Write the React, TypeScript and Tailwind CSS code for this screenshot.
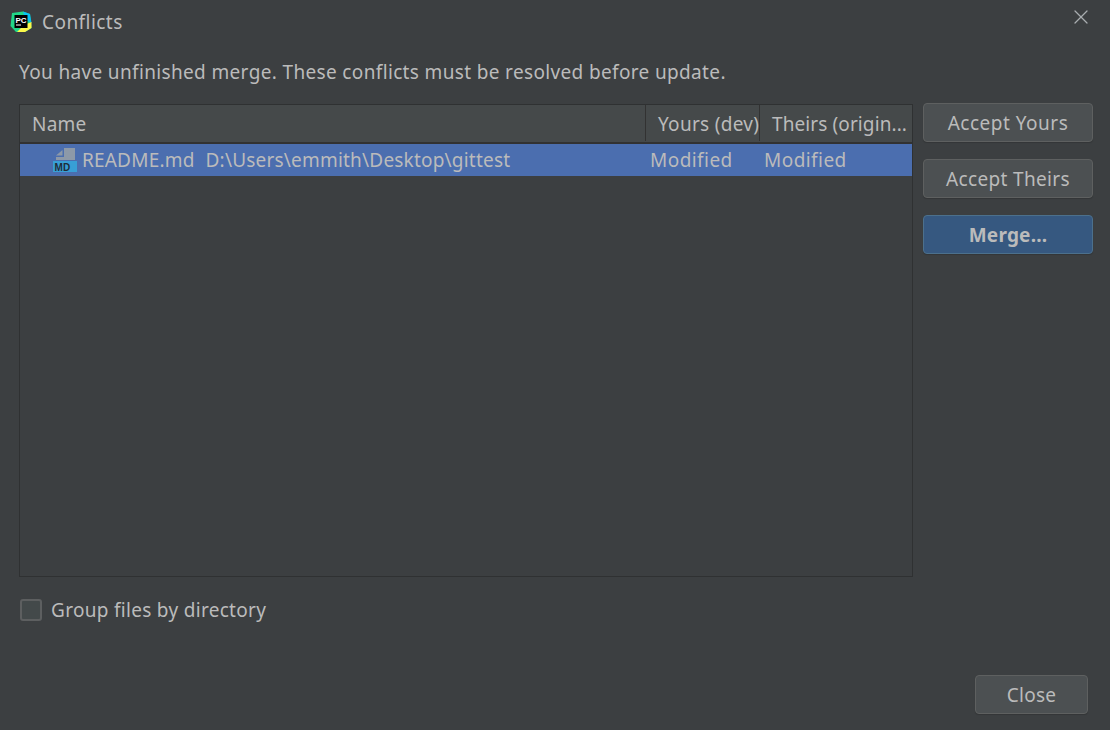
import { X } from 'lucide-react';

function PyCharmIcon() {
  return (
    <svg width="22" height="22" viewBox="0 0 22 22" className="shrink-0">
      <path d="M2 2 L13 0.5 L20 3 L21.5 17 L15 21 L6 21 L0.5 15 Z" fill="#21d789" />
      <path d="M13 0.5 L20 3 L21.5 12 L15 8 Z" fill="#07c3f2" />
      <path d="M21.5 11 L21.5 17 L15 21 L7 21 L14 14 Z" fill="#fcf84a" />
      <rect x="4.5" y="4" width="13" height="13" fill="#000000" />
      <text x="5.5" y="11.5" fontSize="8" fontWeight="700" fill="#ffffff" fontFamily="'Liberation Sans', sans-serif">PC</text>
      <rect x="6" y="13.5" width="5" height="1" fill="#ffffff" />
    </svg>
  );
}

function MarkdownIcon() {
  return (
    <svg width="26" height="26" viewBox="0 0 26 26" className="shrink-0">
      <path d="M4 8.5 L10.5 3 L10.5 8.5 Z" fill="#8d99a8" />
      <path d="M12 1 H23 V13 H4 V10 H12 Z" fill="#8d99a8" />
      <rect x="1" y="14" width="24" height="11" fill="#389fd6" />
      <text x="2.5" y="23.5" fontSize="10" fontWeight="700" fill="#1f2d3a" fontFamily="'Liberation Sans', sans-serif">MD</text>
    </svg>
  );
}

function DialogButton({ label, primary, spacing }: { label: string; primary?: boolean; spacing: string }) {
  return (
    <button
      className={`w-[170px] h-[39px] rounded-[4px] border text-[#bbbbbb] text-[19px] shadow-[0_1px_1px_rgba(0,0,0,0.15)] ${spacing} ${
        primary ? 'bg-[#365880] border-[#4c708c] font-bold' : 'bg-[#4c5052] border-[#5e6060]'
      }`}
    >
      {label}
    </button>
  );
}

export default function App() {
  return (
    <div className="w-[1110px] h-[730px] bg-[#3c3f41] text-[#bbbbbb] text-[19px] leading-[26px] flex flex-col overflow-hidden font-['Noto_Sans','Open_Sans',sans-serif]">
      <div className="h-[44px] flex items-center pl-[10px] pr-[17px]">
        <PyCharmIcon />
        <span className="ml-[10px] flex-1 tracking-[0.45px]">Conflicts</span>
        <X className="w-[24px] h-[24px] text-[#a9adb0] -mt-[10px]" strokeWidth={1.25} />
      </div>

      <div className="pl-[19px] mt-[15px] h-[26px] tracking-[0.35px]">
        You have unfinished merge. These conflicts must be resolved before update.
      </div>

      <div className="flex mt-[19px] pl-[19px] gap-[10px]">
        <div className="w-[894px] h-[473px] border border-[#2f3132] flex flex-col">
          <div className="h-[39px] flex bg-[#45494a] border-b-[2px] border-[#323232] shrink-0">
            <div className="w-[626px] pl-[12px] pt-[6px] border-r border-[#323232] mb-[1px] tracking-[0.2px]">Name</div>
            <div className="w-[114px] pl-[12px] pt-[6px] border-r border-[#323232] mb-[1px] whitespace-nowrap overflow-hidden tracking-[0.3px]">Yours (dev)</div>
            <div className="flex-1 pl-[12px] pt-[6px] whitespace-nowrap overflow-hidden tracking-[0.1px]">Theirs (origin...</div>
          </div>
          <div className="h-[32px] flex items-center bg-[#4b6eaf] shrink-0">
            <div className="w-[630px] flex items-center pl-[32px] whitespace-nowrap tracking-[0.2px]">
              <MarkdownIcon />
              <span className="ml-[4px]">README.md</span>
              <span className="ml-[11px]">D:\Users\emmith\Desktop\gittest</span>
            </div>
            <div className="w-[114px] tracking-[0.45px]">Modified</div>
            <div className="tracking-[0.45px]">Modified</div>
          </div>
        </div>

        <div className="flex flex-col gap-[17px] -mt-[1px]">
          <DialogButton label="Accept Yours" spacing="tracking-[0.5px]" />
          <DialogButton label="Accept Theirs" spacing="tracking-[0.35px]" />
          <DialogButton label="Merge..." spacing="tracking-[0.2px]" primary />
        </div>
      </div>

      <label className="flex items-center mt-[21px] ml-[20px] h-[24px]">
        <span className="w-[22px] h-[22px] rounded-[3px] border-[2px] border-[#5d5f60] bg-[#43494a]" />
        <span className="ml-[9px] tracking-[0.3px]">Group files by directory</span>
      </label>

      <div className="flex justify-end mt-[53px] pr-[22px]">
        <button className="w-[113px] h-[39px] rounded-[4px] border border-[#5e6060] bg-[#4c5052] text-[19px] tracking-[0.3px] shadow-[0_1px_1px_rgba(0,0,0,0.15)]">
          Close
        </button>
      </div>
    </div>
  );
}
